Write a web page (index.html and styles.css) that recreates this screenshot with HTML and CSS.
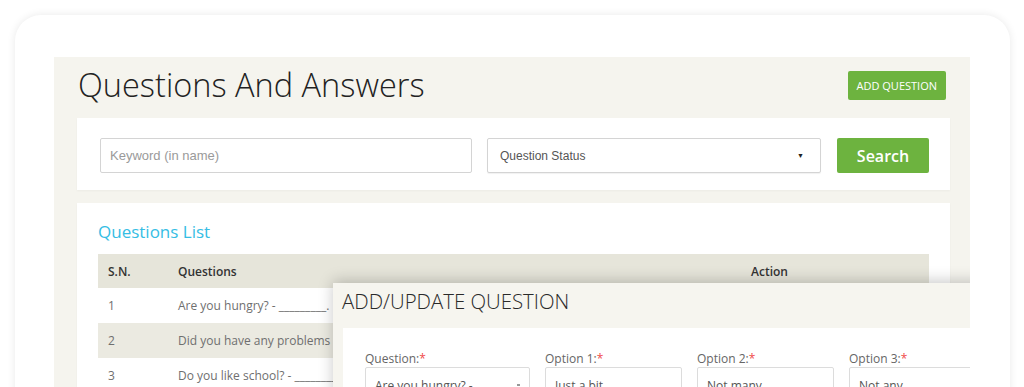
FILE: index.html
```html
<!DOCTYPE html>
<html lang="en">
<head>
<meta charset="utf-8">
<title>Questions And Answers</title>
<link rel="stylesheet" href="styles.css">
</head>
<body>
<div class="frame">
  <div class="panel">
    <div class="page-head">
      <h1 class="page-title">Questions And Answers</h1>
      <button class="btn-add">ADD QUESTION</button>
    </div>

    <div class="card search-card">
      <input class="field keyword" type="text" placeholder="Keyword (in name)">
      <div class="field select"><span>Question Status</span><span class="caret">&#9660;</span></div>
      <button class="btn-search">Search</button>
    </div>

    <div class="card list-card">
      <h2 class="list-title">Questions List</h2>
      <table class="q-table">
        <thead>
          <tr><th class="c-sn">S.N.</th><th class="c-q">Questions</th><th class="c-act">Action</th></tr>
        </thead>
        <tbody>
          <tr><td>1</td><td>Are you hungry? - _________.</td><td></td></tr>
          <tr class="alt"><td>2</td><td>Did you have any problems --------- with the homework?</td><td></td></tr>
          <tr><td>3</td><td>Do you like school? - ________.</td><td></td></tr>
        </tbody>
      </table>
    </div>

    <div class="modal">
      <h3 class="modal-title">ADD/UPDATE QUESTION</h3>
      <div class="modal-body">
        <div class="form-group g-question">
          <label class="lbl">Question:<span class="req">*</span></label>
          <div class="inp"><span>Are you hungry? -</span><span class="mini-caret"></span></div>
        </div>
        <div class="form-group g-opt">
          <label class="lbl">Option 1:<span class="req">*</span></label>
          <div class="inp"><span>Just a bit</span></div>
        </div>
        <div class="form-group g-opt">
          <label class="lbl">Option 2:<span class="req">*</span></label>
          <div class="inp"><span>Not many</span></div>
        </div>
        <div class="form-group g-opt">
          <label class="lbl">Option 3:<span class="req">*</span></label>
          <div class="inp"><span>Not any</span></div>
        </div>
      </div>
    </div>
  </div>
</div>
</body>
</html>
```

FILE: styles.css
```css
html, body {
  margin: 0;
  padding: 0;
}
body {
  background: #ffffff;
  font-family: "Open Sans", "Liberation Sans", sans-serif;
  height: 387px;
  overflow: hidden;
}

.frame {
  margin: 15px 14px 0 15px;
  height: 420px;
  box-sizing: border-box;
  background: #ffffff;
  border-radius: 26px 26px 0 0;
  box-shadow: 0 0 9px rgba(0, 0, 0, 0.09);
  padding: 42px 40px 0 39px;
}

.panel {
  position: relative;
  overflow: hidden;
  height: 100%;
  background: #f5f4ee;
  padding: 0 20px 0 23px;
}

/* header */
.page-head {
  display: flex;
  justify-content: space-between;
  align-items: flex-start;
  height: 61px;
}
.page-title {
  margin: 0;
  padding: 10px 0 0 1px;
  font-size: 32.5px;
  line-height: 36px;
  font-weight: 300;
  color: #222;
}
.btn-add {
  margin: 14px 4px 0 0;
  height: 29px;
  padding: 0 9px;
  border: 0;
  border-radius: 2px;
  background: #6db33f;
  color: #ffffff;
  font-family: "Open Sans", sans-serif;
  font-size: 11px;
  font-weight: 400;
}

/* cards */
.card {
  background: #ffffff;
  box-shadow: 0 1px 2px rgba(0, 0, 0, 0.04);
}
.search-card {
  display: flex;
  align-items: center;
  padding: 20px 21px 17px 23px;
}
.field {
  box-sizing: border-box;
  height: 35px;
  border: 1px solid #d4d4d4;
  border-radius: 2px;
  background: #ffffff;
}
.keyword {
  width: 372px;
  padding: 0 9px;
  font-family: "Liberation Sans", Arial, sans-serif;
  font-size: 13px;
  color: #555;
  outline: none;
}
.keyword::placeholder {
  color: #9a9a9a;
}
.select {
  width: 334px;
  margin-left: 15px;
  display: flex;
  align-items: center;
  justify-content: space-between;
  padding: 0 16px 0 12px;
  font-family: "Liberation Sans", Arial, sans-serif;
  font-size: 12px;
  color: #555;
  box-shadow: 0 1px 1px rgba(0, 0, 0, 0.06);
}
.caret {
  font-size: 7px;
  color: #222;
}
.btn-search {
  width: 92px;
  height: 35px;
  margin-left: 16px;
  border: 0;
  border-radius: 2px;
  background: #6db33f;
  color: #ffffff;
  font-family: "Open Sans", sans-serif;
  font-size: 16px;
  font-weight: 600;
}

.list-card {
  margin-top: 13px;
  height: 300px;
  padding: 0 21px;
}
.list-title {
  margin: 0 0 10px 0;
  padding-top: 17px;
  font-size: 17px;
  line-height: 24px;
  font-weight: 400;
  color: #35bde4;
}

.q-table {
  width: 100%;
  border-collapse: collapse;
  font-size: 12px;
}
.q-table th {
  height: 34px;
  padding: 0 10px;
  text-align: left;
  background: #e6e5da;
  color: #333;
  font-weight: 600;
}
.c-sn { width: 50px; }
.c-q { width: 553px; }
.q-table td {
  height: 35px;
  padding: 0 10px;
  color: #6f6f6f;
  white-space: nowrap;
}
.q-table tr.alt td {
  background: #ebeae1;
}

/* modal */
.modal {
  position: absolute;
  left: 279px;
  top: 226px;
  width: 700px;
  height: 200px;
  background: #f6f5ef;
  box-shadow: 0 -2px 14px rgba(0, 0, 0, 0.22);
}
.modal-title {
  margin: 0;
  padding: 8px 0 0 9px;
  height: 37px;
  font-size: 20.4px;
  line-height: 21px;
  font-weight: 300;
  color: #2a2a2a;
}
.modal-body {
  margin-left: 10px;
  height: 200px;
  background: #ffffff;
  display: flex;
  gap: 15px;
  padding: 23px 0 0 22px;
}
.form-group {
  display: flex;
  flex-direction: column;
}
.g-question { width: 165px; }
.g-opt { width: 137px; }
.lbl {
  font-size: 12px;
  line-height: 16px;
  color: #666;
}
.req {
  color: #f04a4a;
}
.inp {
  box-sizing: border-box;
  height: 36px;
  border: 1px solid #dcdcdc;
  border-radius: 2px;
  display: flex;
  align-items: center;
  justify-content: space-between;
  padding: 0 9px;
  font-size: 12px;
  color: #555;
}
.mini-caret {
  width: 3px;
  height: 2px;
  background: #999;
}
```
